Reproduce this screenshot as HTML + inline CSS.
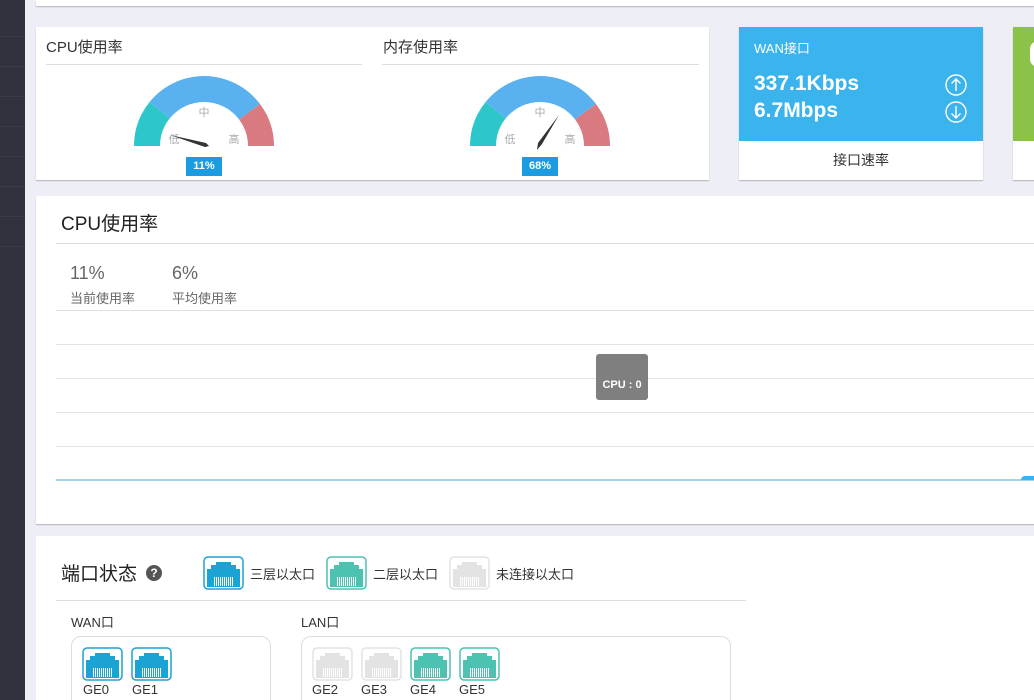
<!DOCTYPE html>
<html style="overflow:hidden;width:1034px;height:700px"><head><meta charset="utf-8">
<style>
*{margin:0;padding:0;box-sizing:border-box}
body{width:1034px;height:700px;overflow:hidden;background:#eeeef6;font-family:"Liberation Sans","Noto Sans CJK SC",sans-serif;position:relative;color:#333}
.abs{position:absolute}
.side{left:0;top:0;width:25px;height:700px;background:#30333d}
.card{background:#fff;box-shadow:0 1px 1px rgba(0,0,0,.25)}
.t{position:absolute;white-space:nowrap}
.port{position:absolute;width:41px;height:34px}
</style></head><body>
<svg width="0" height="0" style="position:absolute">
<defs>
<symbol id="rj" viewBox="0 0 41 34">
<rect x="1" y="1" width="39" height="32" rx="4" fill="#fff" stroke="currentColor" stroke-width="1.5"/>
<path d="M4 31V13H8V9H13V6H28V9H33V13H37V31Z" fill="currentColor"/>
<g stroke="#fff" stroke-width="1">
<path d="M11.5 21V30M13.5 21V30M15.5 21V30M17.5 21V30M19.5 21V30M21.5 21V30M23.5 21V30M25.5 21V30M27.5 21V30M29.5 21V30"/>
</g>
</symbol>
</defs></svg>
<div class="abs side">
<div class="abs" style="left:0;top:36px;width:25px;height:1px;background:#3a3d47"></div>
<div class="abs" style="left:0;top:66px;width:25px;height:1px;background:#3a3d47"></div>
<div class="abs" style="left:0;top:96px;width:25px;height:1px;background:#3a3d47"></div>
<div class="abs" style="left:0;top:126px;width:25px;height:1px;background:#3a3d47"></div>
<div class="abs" style="left:0;top:156px;width:25px;height:1px;background:#3a3d47"></div>
<div class="abs" style="left:0;top:186px;width:25px;height:1px;background:#3a3d47"></div>
<div class="abs" style="left:0;top:216px;width:25px;height:1px;background:#3a3d47"></div>
<div class="abs" style="left:0;top:246px;width:25px;height:1px;background:#3a3d47"></div>
</div>
<div class="abs card" style="left:36px;top:0;width:998px;height:6px"></div>

<div class="abs card" style="left:36px;top:27px;width:673px;height:153px">
<div class="t" style="left:10px;top:9px;font-size:15px;color:#333">CPU使用率</div>
<div class="abs" style="left:10px;top:37px;width:316px;height:1px;background:#ddd"></div>
<div class="t" style="left:347px;top:9px;font-size:15px;color:#333">内存使用率</div>
<div class="abs" style="left:346px;top:37px;width:317px;height:1px;background:#ddd"></div>
</div>
<svg class="abs" style="left:0;top:0" width="709" height="180">
<g transform="translate(204,146)">
<path d="M-70 0A70 70 0 0 1 -54.4 -44 L-34.2 -27.7 A44 44 0 0 0 -44 0Z" fill="#2ec7c9"/>
<path d="M-54.4 -44A70 70 0 0 1 55.9 -42.1 L35.1 -26.5 A44 44 0 0 0 -34.2 -27.7Z" fill="#5ab1ef"/>
<path d="M55.9 -42.1A70 70 0 0 1 70 0 L44 0 A44 44 0 0 0 35.1 -26.5Z" fill="#d87a80"/>
<text x="0" y="-30" font-size="11" fill="#aaa" text-anchor="middle" font-family="Noto Sans CJK SC,sans-serif">中</text>
<text x="-30" y="-3" font-size="11" fill="#aaa" text-anchor="middle" font-family="Noto Sans CJK SC,sans-serif">低</text>
<text x="30" y="-3" font-size="11" fill="#aaa" text-anchor="middle" font-family="Noto Sans CJK SC,sans-serif">高</text>
<path d="M-34 -11 L2 -3 L5 0 L1 1 Z" fill="#333"/>
</g>
<g transform="translate(540,146)">
<path d="M-70 0A70 70 0 0 1 -54.4 -44 L-34.2 -27.7 A44 44 0 0 0 -44 0Z" fill="#2ec7c9"/>
<path d="M-54.4 -44A70 70 0 0 1 55.9 -42.1 L35.1 -26.5 A44 44 0 0 0 -34.2 -27.7Z" fill="#5ab1ef"/>
<path d="M55.9 -42.1A70 70 0 0 1 70 0 L44 0 A44 44 0 0 0 35.1 -26.5Z" fill="#d87a80"/>
<text x="0" y="-30" font-size="11" fill="#aaa" text-anchor="middle" font-family="Noto Sans CJK SC,sans-serif">中</text>
<text x="-30" y="-3" font-size="11" fill="#aaa" text-anchor="middle" font-family="Noto Sans CJK SC,sans-serif">低</text>
<text x="30" y="-3" font-size="11" fill="#aaa" text-anchor="middle" font-family="Noto Sans CJK SC,sans-serif">高</text>
<path d="M19 -31 L2 -2 L-3 4 L-2 -3 Z" fill="#333"/>
</g>
</svg>
<div class="abs" style="left:186px;top:157px;width:36px;height:19px;background:#1b9ce0;color:#fff;font-size:11px;font-weight:bold;text-align:center;line-height:19px">11%</div>
<div class="abs" style="left:522px;top:157px;width:36px;height:19px;background:#1b9ce0;color:#fff;font-size:11px;font-weight:bold;text-align:center;line-height:19px">68%</div>

<div class="abs card" style="left:739px;top:27px;width:244px;height:153px">
<div class="abs" style="left:0;top:0;width:244px;height:114px;background:#3bb4ed"></div>
<div class="t" style="left:15px;top:11px;font-size:13px;color:#fff">WAN接口</div>
<div class="t" style="left:15px;top:45px;font-size:21px;font-weight:bold;color:#fff">337.1Kbps</div>
<div class="t" style="left:15px;top:72px;font-size:21px;font-weight:bold;color:#fff">6.7Mbps</div>
<svg class="abs" style="left:205px;top:47px" width="24" height="50" fill="none" stroke="#fff" stroke-width="1.4">
<circle cx="12" cy="11" r="10"/><path d="M12 17V5M7.5 9.5L12 5L16.5 9.5"/>
<circle cx="12" cy="38" r="10"/><path d="M12 32V44M7.5 39.5L12 44L16.5 39.5"/>
</svg>
<div class="t" style="left:0;width:244px;text-align:center;top:123px;font-size:14px;color:#333">接口速率</div>
</div>
<div class="abs card" style="left:1013px;top:27px;width:30px;height:153px">
<div class="abs" style="left:0;top:0;width:30px;height:114px;background:#8bc34a"></div>
<div class="abs" style="left:17px;top:14px;width:16px;height:26px;border-radius:8px;background:#fff"></div>
</div>

<div class="abs card" style="left:36px;top:196px;width:1000px;height:328px">
<div class="t" style="left:25px;top:13px;font-size:19px;color:#222">CPU使用率</div>
<div class="abs" style="left:20px;top:47px;width:980px;height:1px;background:#ddd"></div>
<div class="t" style="left:34px;top:67px;font-size:18px;color:#666">11%</div>
<div class="t" style="left:34px;top:92px;font-size:13px;color:#666">当前使用率</div>
<div class="t" style="left:136px;top:67px;font-size:18px;color:#666">6%</div>
<div class="t" style="left:136px;top:92px;font-size:13px;color:#666">平均使用率</div>
<div class="abs" style="left:20px;top:114px;width:980px;height:1px;background:#ddd"></div>
<div class="abs" style="left:20px;top:148px;width:980px;height:1px;background:#e2e2e2"></div>
<div class="abs" style="left:20px;top:182px;width:980px;height:1px;background:#e2e2e2"></div>
<div class="abs" style="left:20px;top:216px;width:980px;height:1px;background:#e2e2e2"></div>
<div class="abs" style="left:20px;top:250px;width:980px;height:1px;background:#e2e2e2"></div>
<div class="abs" style="left:20px;top:283px;width:980px;height:2px;background:#9fd8ee"></div>
<div class="abs" style="left:985px;top:280px;width:15px;height:4px;background:#3bb4ed;border-radius:4px 0 0 0"></div>
<div class="abs" style="left:560px;top:158px;width:52px;height:46px;background:#7f7f7f;border-radius:3px;color:#fff;font-size:11px;font-weight:bold;text-align:center;padding-top:25px">CPU : 0</div>
</div>

<div class="abs card" style="left:36px;top:536px;width:1000px;height:164px;box-shadow:none">
<div class="t" style="left:25px;top:23px;font-size:19px;color:#222">端口状态</div>
<div class="abs" style="left:110px;top:29px;width:16px;height:16px;border-radius:8px;background:#555;color:#fff;font-size:12px;font-weight:bold;text-align:center;line-height:16px">?</div>
<svg class="port" style="left:167px;top:20px;color:#1aa3d3"><use href="#rj"/></svg>
<div class="t" style="left:214px;top:28px;font-size:13px;color:#333">三层以太口</div>
<svg class="port" style="left:290px;top:20px;color:#4cc2b0"><use href="#rj"/></svg>
<div class="t" style="left:337px;top:28px;font-size:13px;color:#333">二层以太口</div>
<svg class="port" style="left:413px;top:20px;color:#e3e3e3"><use href="#rj"/></svg>
<div class="t" style="left:460px;top:28px;font-size:13px;color:#333">未连接以太口</div>
<div class="abs" style="left:20px;top:64px;width:690px;height:1px;background:#ddd"></div>
<div class="t" style="left:35px;top:76px;font-size:13px;color:#333">WAN口</div>
<div class="t" style="left:265px;top:76px;font-size:13px;color:#333">LAN口</div>
<div class="abs" style="left:35px;top:100px;width:200px;height:80px;border:1px solid #ddd;border-radius:10px"></div>
<div class="abs" style="left:265px;top:100px;width:430px;height:80px;border:1px solid #ddd;border-radius:10px"></div>
<svg class="port" style="left:46px;top:111px;color:#1aa3d3"><use href="#rj"/></svg>
<svg class="port" style="left:95px;top:111px;color:#1aa3d3"><use href="#rj"/></svg>
<div class="t" style="left:47px;top:146px;font-size:13px">GE0</div>
<div class="t" style="left:96px;top:146px;font-size:13px">GE1</div>
<svg class="port" style="left:276px;top:111px;color:#e3e3e3"><use href="#rj"/></svg>
<svg class="port" style="left:325px;top:111px;color:#e3e3e3"><use href="#rj"/></svg>
<svg class="port" style="left:374px;top:111px;color:#4cc2b0"><use href="#rj"/></svg>
<svg class="port" style="left:423px;top:111px;color:#4cc2b0"><use href="#rj"/></svg>
<div class="t" style="left:276px;top:146px;font-size:13px">GE2</div>
<div class="t" style="left:325px;top:146px;font-size:13px">GE3</div>
<div class="t" style="left:374px;top:146px;font-size:13px">GE4</div>
<div class="t" style="left:423px;top:146px;font-size:13px">GE5</div>
</div>
</body></html>
